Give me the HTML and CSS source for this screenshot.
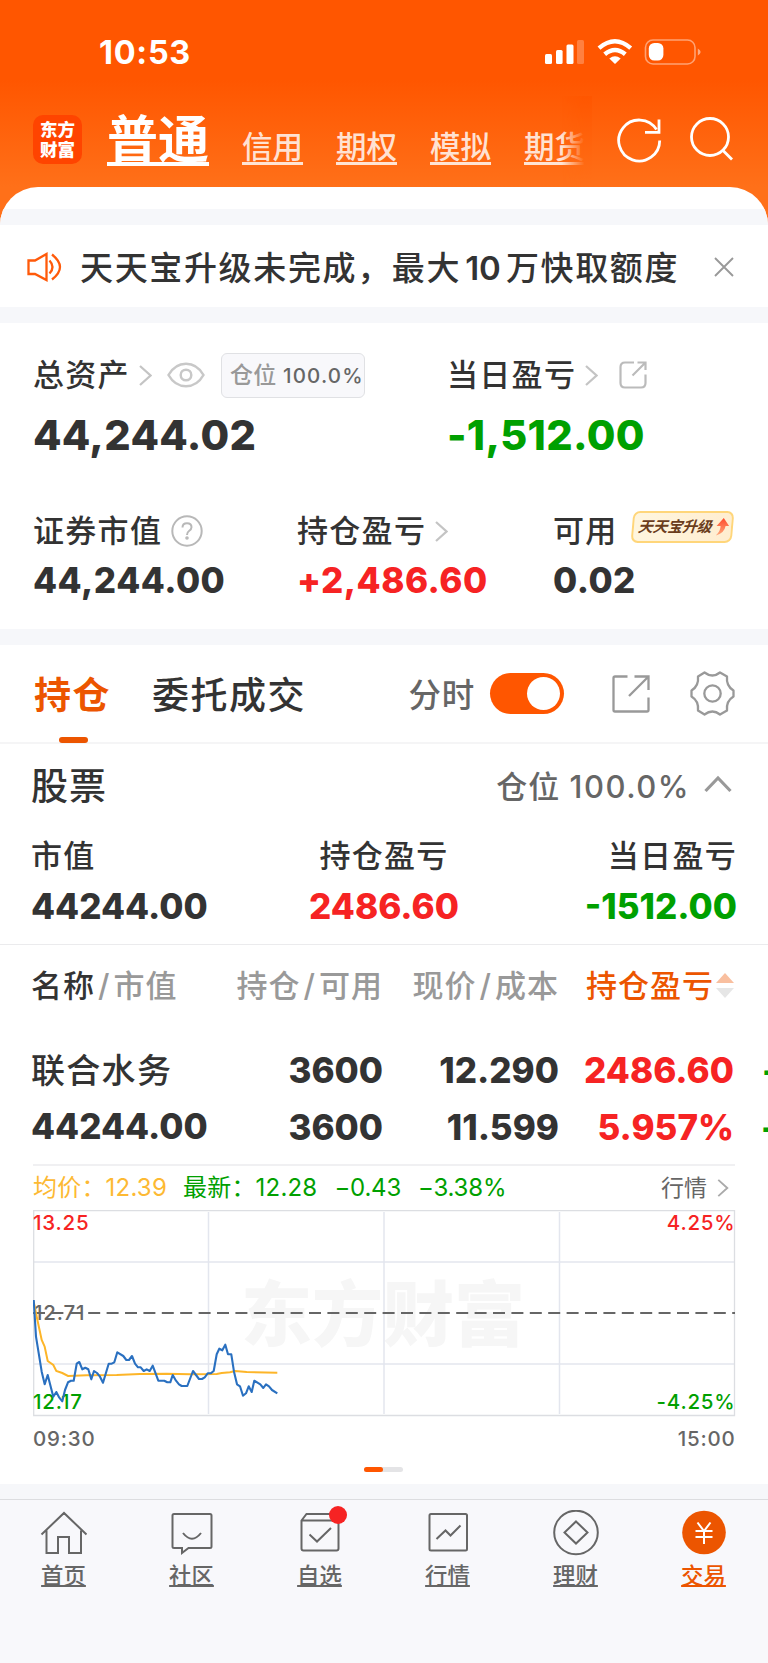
FILE: index.html
```html
<!DOCTYPE html>
<html lang="zh-CN">
<head>
    <meta charset="UTF-8">
    <meta name="viewport" content="width=device-width, initial-scale=1.0">
    <title>东方财富 - 交易</title>
    <link rel="stylesheet" href="styles.css">
</head>
<body>
<div class="phone">
    <div class="statusbar">
        <span class="time">10:53</span>
        <svg class="status-icons" width="158" height="28" viewBox="0 0 158 28">
            <g fill="#fff">
                <rect x="1" y="16" width="7" height="10" rx="1.5"/>
                <rect x="12" y="12" width="6.6" height="14" rx="1.5"/>
                <rect x="22.5" y="6.5" width="7" height="19.5" rx="1.5"/>
                <rect x="33" y="2" width="7" height="24" rx="1.5" opacity=".25"/>
            </g>
            <g fill="none" stroke="#fff" stroke-width="4.4">
                <path d="M55 10.2 Q71 -3.6 86.700 10.2"/>
                <path d="M60.700 16.3 Q71 7.6 81.300 16.3"/>
            </g>
            <path d="M65.3 20.6 Q71 15.8 76.700 20.6 L71 26 Z" fill="#fff"/>
            <rect x="101.500" y="2" width="49.5" height="24" rx="7.5" fill="none" stroke="#fff" stroke-opacity=".45" stroke-width="1.6"/>
            <rect x="104.800" y="5" width="14.6" height="17.6" rx="5.500" fill="#fff"/>
            <path d="M153.8 10.5 Q159.500 14 153.8 17.5 Z" fill="#fff" opacity=".5"/>
        </svg>
    </div>

    <div class="topnav">
        <div class="logo"><span>东方</span><span>财富</span></div>
        <div class="accounts">
            <a class="current">普通</a>
            <a>信用</a>
            <a>期权</a>
            <a>模拟</a>
            <a>期货</a>
        </div>
        <svg class="nav-icon refresh" width="46" height="46" viewBox="0 0 46 46" fill="none" stroke="#fff" stroke-width="2.800">
            <path d="M42.7 23.5 A20.5 20.5 0 1 1 39.5 12.5"/>
            <path d="M42 2.5 V15.3 H28"/>
        </svg>
        <svg class="nav-icon" width="46" height="46" viewBox="0 0 46 46" fill="none" stroke="#fff" stroke-width="2.800">
            <circle cx="21" cy="20" r="18.5"/>
            <path d="M33.5 33 L43 42.500"/>
        </svg>
    </div>

    <div class="sheet">
        <div class="sheet-top"></div>
        <div class="gap"></div>

        <div class="notice">
            <svg width="36" height="32" viewBox="0 0 36 32" fill="none" stroke="#ff5a0a" stroke-width="2.300">
                <path d="M2.500 9.500 H9 L20.500 3 V29 L9 23 H2.500 Z"/>
                <path d="M23.500 9.500 Q29.500 16 23.500 22.500"/>
                <path d="M26 3.500 Q42 16 26 28.500"/>
            </svg>
            <span class="notice-text">天天宝升级未完成，最大<b>10</b>万快取额度</span>
            <svg class="close" width="20" height="20" viewBox="0 0 20 20" stroke="#999" stroke-width="1.9">
                <path d="M1 1 L19 19 M19 1 L1 19"/>
            </svg>
        </div>
        <div class="gap"></div>

        <div class="assets">
            <div class="asset-total">
                <div class="label">总资产
                    <svg class="chev" width="13" height="21" viewBox="0 0 13 21"><path d="M1 1 L11.500 10.500 L1 20"/></svg>
                    <svg class="eye" width="38" height="26" viewBox="0 0 38 26" fill="none" stroke="#c8c8c8" stroke-width="2.500">
                        <path d="M1.500 13 C10 -2 28 -2 36.500 13 C28 28 10 28 1.500 13 Z"/>
                        <circle cx="19" cy="13" r="5.300"/>
                    </svg>
                    <span class="ratio">仓位 <b>100.0%</b></span>
                </div>
                <div class="big">44,244.02</div>
            </div>
            <div class="asset-today">
                <div class="label">当日盈亏
                    <svg class="chev" width="13" height="21" viewBox="0 0 13 21"><path d="M1 1 L11.500 10.500 L1 20"/></svg>
                    <svg class="share" width="28" height="28" viewBox="0 0 28 28" fill="none" stroke="#bbb" stroke-width="2.200">
                        <path d="M15 1.500 H6 Q1.500 1.500 1.500 6 V22 Q1.500 26.500 6 26.500 H22 Q26.500 26.500 26.500 22 V13.500"/>
                        <path d="M18.500 1.500 H26.500 V9 M26 2 L13.500 14.500"/>
                    </svg>
                </div>
                <div class="big green">-1,512.00</div>
            </div>
        </div>
        <div class="assets second">
            <div class="asset-stock">
                <div class="label">证券市值
                    <svg class="help" width="32" height="32" viewBox="0 0 32 32" fill="none" stroke="#b8b8b8" stroke-width="2">
                        <circle cx="16" cy="16" r="14.700"/>
                        <path d="M11.500 12.500 Q11.500 8.300 16 8.300 Q20.500 8.300 20.500 12.300 Q20.500 14.300 18 16 Q16 17.400 16 20"/>
                        <circle cx="16" cy="23" r=".8" fill="#b8b8b8"/>
                    </svg>
                </div>
                <div class="mid">44,244.00</div>
            </div>
            <div class="asset-hold">
                <div class="label">持仓盈亏
                    <svg class="chev" width="13" height="21" viewBox="0 0 13 21"><path d="M1 1 L11.500 10.500 L1 20"/></svg>
                </div>
                <div class="mid red">+2,486.60</div>
            </div>
            <div class="asset-cash">
                <div class="label">可用
                    <span class="upgrade"><i>天天宝升级</i>
                        <svg width="14" height="18" viewBox="0 0 14 18">
                            <defs><linearGradient id="up" x1="0" y1="0" x2="0" y2="1"><stop offset="0" stop-color="#ff4a2c"/><stop offset="1" stop-color="#ffa77a"/></linearGradient></defs>
                            <path d="M8 0 L14 8 H10.500 Q10 15 1.500 17.500 Q6 13 5.500 8 H1.500 Z" fill="url(#up)"/>
                        </svg>
                    </span>
                </div>
                <div class="mid">0.02</div>
            </div>
        </div>
        <div class="gap"></div>

        <div class="tabs">
            <span class="tab active">持仓</span>
            <span class="tab">委托成交</span>
            <span class="switch-label">分时</span>
            <span class="switch"></span>
            <svg class="export" width="38" height="38" viewBox="0 0 38 38" fill="none" stroke="#999" stroke-width="2.300">
                <path d="M15.500 1.500 H3 Q1.500 1.500 1.500 3 V35 Q1.500 36.500 3 36.500 H35 Q36.500 36.500 36.500 35 V22.500"/>
                <path d="M22.500 1.500 H36.500 V15 M36 2 L17 21"/>
            </svg>
            <svg class="gear" width="45" height="45" viewBox="0 0 45 45" fill="none" stroke="#999" stroke-width="2.300" stroke-linejoin="round">
                <path d="M14.500 1.500 Q22.500 7.500 30 1.500 L37 5.500 Q36 15 43.500 19.500 V25.500 Q36 30 37 39.500 L30 43.500 Q22.500 37.500 14.500 43.500 L8 39.500 Q9 30 1.500 25.500 V19.500 Q9 15 8 5.500 Z"/>
                <circle cx="22.500" cy="22.500" r="8.200"/>
            </svg>
        </div>

        <div class="group-head">
            <span class="group-name">股票</span>
            <span class="group-ratio">仓位 <b>100.0%</b></span>
            <svg width="28" height="18" viewBox="0 0 28 18" fill="none" stroke="#999" stroke-width="3.200"><path d="M1.500 16 L14 3 L26.500 16"/></svg>
        </div>
        <div class="summary">
            <div><p>市值</p><strong>44244.00</strong></div>
            <div class="center"><p>持仓盈亏</p><strong class="red">2486.60</strong></div>
            <div class="right"><p>当日盈亏</p><strong class="green">-1512.00</strong></div>
        </div>

        <div class="grid-row head">
            <span><em>名称</em><s>/</s>市值</span>
            <span>持仓<s>/</s>可用</span>
            <span>现价<s>/</s>成本</span>
            <span class="sorted">持仓盈亏<svg width="18" height="28" viewBox="0 0 18 28">
                <path d="M9 1 L18 11 H0 Z" fill="#f9bf9f"/>
                <path d="M9 26 L18 16 H0 Z" fill="#e6e6e6"/>
            </svg></span>
        </div>
        <div class="grid-row stock">
            <span class="name">联合水务</span>
            <span>3600</span>
            <span>12.290</span>
            <span class="red">2486.60</span>
            <span class="green next">-</span>
        </div>
        <div class="grid-row stock last">
            <span class="amount">44244.00</span>
            <span>3600</span>
            <span>11.599</span>
            <span class="red">5.957%</span>
            <span class="green next more">-</span>
        </div>

        <div class="quote">
            <span class="avg">均价：12.39</span>
            <span class="latest price">最新：12.28</span>
            <span class="latest">−0.43</span>
            <span class="latest">−3.38%</span>
            <span class="link">行情<svg class="chev" width="12" height="18" viewBox="0 0 13 21"><path d="M1 1 L11.500 10.500 L1 20"/></svg></span>
        </div>

        <svg class="chart" width="704" height="250" viewBox="0 0 704 250">
            <text class="watermark" x="208" y="130">东方财富</text>
            <g fill="none" stroke="#e3e6ee" stroke-width="1.500">
                <path d="M.5 52 H702 M.5 154 H702 M175.500 2 V204 M351 2 V204 M526.500 2 V204"/>
            </g>
            <path d="M.7 205.500 V.5 H701.500 V205.500 Z" fill="none" stroke="#dcdee2" stroke-width="1.300"/>
            <path d="M0 103 H702" stroke="#666" stroke-width="2" stroke-dasharray="12 6.400"/>
            <g class="axis">
                <text x="0" y="19.500" fill="#f62323">13.25</text>
                <text x="1" y="109.500">12.71</text>
                <text x="0" y="199" fill="#00a000">12.17</text>
                <text x="702.500" y="19.500" text-anchor="end" fill="#f62323">4.25%</text>
                <text x="702.500" y="199" text-anchor="end" fill="#00a000">-4.25%</text>
                <text x="0" y="236">09:30</text>
                <text x="702.500" y="236" text-anchor="end">15:00</text>
            </g>
            <polyline fill="none" stroke="#fdb528" stroke-width="2" points="0.700,91.700 3.700,106.700 8.700,130 11.700,136.700 14.700,151 20.300,155 23.300,161 29.300,163 35,166 53.700,165.300 83.700,165 107,164 133.700,163.700 157,164.300 183.700,164 188.700,163 197,162.300 202,161 213.700,162 244.300,162.700"/>
            <polyline fill="none" stroke="#2a70c0" stroke-width="2.100" stroke-linejoin="round" points="0.700,90 3,126.700 8.700,161.700 11.700,174.300 14.700,165 20.300,186.700 23.300,182 26.300,187.700 29.300,191.300 32,180 35,172.300 38,170.700 40.700,170.700 43.700,153.700 46.300,152 49.300,159.300 52.300,157.700 55.300,159.300 58.300,169.300 61,161 64,163 67,166.700 70,172.700 75.700,153.700 78.700,153.700 81.300,152.300 84.300,142.300 90.300,146 93.300,150 96,150 99,146 102,153.700 105,157.300 107.700,157.300 110.700,161 113.700,159.300 116.700,161 119.700,155.700 125.300,170.700 131.300,170.700 134.300,172.300 137.300,172.300 139.700,165 143,170.700 146,174.300 148.700,176 154.300,176 160,161 166,169 169,169 171.700,167.300 174.700,163.300 177.700,163.300 180.700,161 183.700,144.300 186.300,138.700 189.300,140.300 192.300,134.700 195,144.300 198.300,144.300 201,161.700 204,174.300 207,176.300 210,185.700 213,183.300 215.700,176.300 218.700,182 221.300,170.700 227.300,174.300 230.300,178 233,174.300 236,176.300 239,180 244.300,183.300"/>
        </svg>
        <div class="pager"><span></span></div>
    </div>

    <div class="tabbar">
        <a>
            <svg width="48" height="48" viewBox="0 0 48 48"><path d="M1.500 24.500 L24 3 L46.500 24.500 M6.500 20.500 V43 H18 V27 H29 V43 H41 V20.500"/></svg>
            <span>首页</span>
        </a>
        <a>
            <svg width="48" height="48" viewBox="0 0 48 48"><path d="M6 4 H42 Q43.500 4 43.500 5.500 V36.500 Q43.500 38 42 38 H20.500 L14 43 V38 H6 Q4.500 38 4.500 36.500 V5.500 Q4.500 4 6 4 Z M15 23 Q24 34.500 33 23"/></svg>
            <span>社区</span>
        </a>
        <a>
            <svg width="48" height="48" viewBox="0 0 48 48"><path d="M5.500 10.500 L10.500 4 H37.500 L42.500 10.500 V38.500 Q42.500 40.500 40.500 40.500 H7.500 Q5.500 40.500 5.500 38.500 Z M5.500 10.500 H42.500 M13.500 24.500 L21 31.500 L35 18"/></svg>
            <i class="dot"></i>
            <span>自选</span>
        </a>
        <a>
            <svg width="48" height="48" viewBox="0 0 48 48"><path d="M7 4 H41.500 Q43 4 43 5.500 V39 Q43 40.500 41.500 40.500 H7 Q5.500 40.500 5.500 39 V5.500 Q5.500 4 7 4 Z M12.500 29 L21.500 20.500 L26.500 25.500 L36.500 15.500"/></svg>
            <span>行情</span>
        </a>
        <a>
            <svg width="48" height="48" viewBox="0 0 48 48"><circle cx="24" cy="22.500" r="21.800"/><path d="M24 11.500 L35.500 22.500 L24 33.500 L12.500 22.500 Z"/></svg>
            <span>理财</span>
        </a>
        <a class="on">
            <svg width="48" height="48" viewBox="0 0 48 48"><circle cx="24" cy="22.500" r="21.800" fill="#ec5500" stroke="none"/><path d="M17.500 12.500 L24 21 L30.500 12.500 M15.500 21 H32.500 M15.500 27 H32.500 M24 21 V34" stroke="#fff"/></svg>
            <span>交易</span>
        </a>
    </div>
</div>
</body>
</html>
```

FILE: styles.css
```css
* {
    box-sizing: border-box;
}
body {
    margin: 0;
    font-family: Inter, "Noto Sans CJK SC", sans-serif;
    font-weight: 500;
    color: #333;
}
svg {
    display: block;
    flex: none;
}
.phone {
    width: 768px;
    height: 1663px;
    overflow: hidden;
    background: linear-gradient(#ff5600 80px, #ff7019 187px);
}
.red { color: #f62323; }
.green { color: #00a000; }

/* status bar */
.statusbar {
    display: flex;
    align-items: flex-start;
    justify-content: space-between;
    height: 96px;
    padding: 36px 66px 0 99px;
}
.time {
    margin-top: 1px;
    font-size: 32.500px;
    font-weight: 700;
    line-height: 32px;
    letter-spacing: .7px;
    color: #fff;
}
.status-icons {
    margin-top: 2px;
}

/* account tabs */
.topnav {
    display: flex;
    align-items: flex-start;
    height: 91px;
    padding-left: 33px;
}
.logo {
    width: 49px;
    height: 49px;
    margin-top: 19px;
    padding-top: 5px;
    border-radius: 10px;
    background: #ff4400;
    color: #fff;
    font-size: 17.5px;
    font-weight: 900;
    line-height: 20px;
    text-align: center;
}
.logo span {
    display: block;
}
.accounts {
    position: relative;
    display: flex;
    align-items: baseline;
    gap: 33px;
    width: 485px;
    height: 91px;
    margin-left: 25px;
    overflow: hidden;
    white-space: nowrap;
}
.accounts a {
    font-size: 30.5px;
    line-height: 88px;
    color: rgba(255, 255, 255, .82);
    text-decoration: underline;
    text-decoration-thickness: 2.500px;
    text-underline-offset: 3.500px;
    text-decoration-skip-ink: none;
}
.accounts .current {
    font-size: 51px;
    font-weight: 700;
    color: #fff;
    text-decoration-thickness: 4px;
}
.accounts::after {
    content: "";
    position: absolute;
    top: 0;
    right: 0;
    width: 30px;
    height: 91px;
    background: linear-gradient(#ff5600, #ff7019);
    -webkit-mask-image: linear-gradient(to right, transparent, #000 75%);
    mask-image: linear-gradient(to right, transparent, #000 75%);
}
.nav-icon {
    margin-top: 21px;
}
.refresh {
    margin: 21px 26px 0 25px;
}

/* white sheet */
.sheet {
    height: 1312px;
    overflow: hidden;
    border-radius: 38px 38px 0 0;
    background: #fff;
}
.sheet-top {
    height: 22px;
}
.gap {
    height: 16px;
    background: #f6f7fa;
}
.notice {
    display: flex;
    align-items: center;
    height: 82px;
    padding: 2px 34px 0 26px;
}
.notice-text {
    margin: 2px 0 0 18px;
    font-size: 33px;
    line-height: 40px;
    letter-spacing: 1.650px;
    white-space: nowrap;
}
.notice-text b {
    margin: 0 5px 0 4px;
    font-weight: 600;
    letter-spacing: 0;
}
.close {
    margin-left: auto;
}

/* assets */
.assets {
    display: flex;
    height: 153px;
    padding: 30px 33px 0;
}
.label {
    display: flex;
    align-items: center;
    height: 44px;
    font-size: 31px;
    line-height: 44px;
    letter-spacing: 1.300px;
    white-space: nowrap;
}
.chev {
    margin-left: 9px;
    fill: none;
    stroke: #c4c4c4;
    stroke-width: 2.200;
}
.asset-total { width: 414px; }
.eye { margin-left: 15px; }
.ratio {
    width: 144px;
    height: 45px;
    margin-left: 16px;
    padding-left: 8px;
    border: 1px solid #e0e1e4;
    border-radius: 6px;
    background: #f8f8fb;
    font-size: 23px;
    line-height: 43px;
    letter-spacing: .3px;
    color: #999;
}
.ratio b {
    font-size: 20.500px;
    font-weight: 500;
    letter-spacing: 1.200px;
    color: #666;
}
.share { margin-left: 21px; }
.big {
    margin-top: 15px;
    font-size: 41.500px;
    font-weight: 800;
    line-height: 46px;
    letter-spacing: .3px;
}
.second .label {
    height: 38px;
    line-height: 38px;
}
.assets.second {
    padding-top: 36px;
}
.asset-stock { width: 264px; }
.asset-hold { width: 256px; }
.help { margin-left: 9px; }
.mid {
    margin-top: 10px;
    font-size: 35px;
    font-weight: 800;
    line-height: 40px;
    letter-spacing: .5px;
}
.upgrade {
    display: flex;
    align-items: center;
    width: 101px;
    height: 32px;
    margin: -8px 0 0 14px;
    padding-left: 4px;
    border: 2px solid #ffd67a;
    border-radius: 7px;
    background: linear-gradient(100deg, #fff6df, #ffedd0);
    transform: skewX(-5deg);
}
.upgrade i {
    font-size: 15px;
    font-weight: 700;
    line-height: 28px;
    letter-spacing: -.3px;
    color: #6b3d1c;
}
.upgrade svg { margin-left: 3px; }

/* section tabs */
.tabs {
    display: flex;
    align-items: center;
    height: 99px;
    padding-left: 34px;
    border-bottom: 2px solid #f5f5f6;
}
.tab {
    position: relative;
    padding-top: 4px;
    font-size: 37px;
    line-height: 93px;
    letter-spacing: 1.500px;
}
.tab.active {
    margin-right: 41px;
    font-weight: 700;
    color: #ec5500;
}
.tab.active::after {
    content: "";
    position: absolute;
    left: 25px;
    bottom: -1px;
    width: 29px;
    height: 6px;
    border-radius: 3px;
    background: #ec5500;
}
.switch-label {
    margin-left: auto;
    padding-top: 4px;
    font-size: 32.500px;
    line-height: 93px;
    letter-spacing: .8px;
    color: #666;
}
.switch {
    width: 74px;
    height: 41px;
    margin-left: 15px;
    padding: 4px;
    border-radius: 21px;
    background: #ff5600;
}
.switch::after {
    content: "";
    display: block;
    width: 33px;
    height: 33px;
    margin-left: 33px;
    border-radius: 50%;
    background: #fff;
}
.export { margin-left: 48px; }
.gear { margin: 0 33px 0 40px; }

/* stock group */
.group-head {
    display: flex;
    align-items: center;
    height: 80px;
    padding: 0 36px 0 31px;
}
.group-name {
    font-size: 37px;
    letter-spacing: 1px;
}
.group-ratio {
    margin-left: auto;
    font-size: 31px;
    letter-spacing: 1px;
    color: #666;
}
.group-ratio b {
    font-weight: 500;
    letter-spacing: 1.500px;
}
.group-head svg { margin-left: 14px; }
.summary {
    display: flex;
    height: 121px;
    padding: 11px 31px 0;
    border-bottom: 1px solid #ebebed;
}
.summary div { flex: 1; }
.summary .center { text-align: center; }
.summary .right { text-align: right; }
.summary p {
    margin: 0;
    font-size: 31px;
    line-height: 42px;
    letter-spacing: 1.300px;
}
.summary strong {
    display: block;
    margin-top: 8px;
    font-size: 35px;
    font-weight: 800;
    line-height: 42px;
}

/* holdings */
.grid-row {
    display: grid;
    grid-template-columns: 200px 152px 176px 175px 34px;
    width: 768px;
    height: 57px;
    padding-left: 31px;
    font-size: 35px;
    font-weight: 800;
    line-height: 57px;
    text-align: right;
    white-space: nowrap;
}
.grid-row span:first-child {
    text-align: left;
}
.grid-row.head {
    height: 97px;
    font-size: 31px;
    font-weight: 500;
    line-height: 82px;
    letter-spacing: 1px;
    color: #999;
}
.head em {
    font-style: normal;
    color: #333;
}
.head s {
    margin: 0 3px;
    text-decoration: none;
}
.head .sorted {
    display: flex;
    justify-content: flex-end;
    color: #ec5500;
}
.sorted svg { margin: 27px 0 0 2px; }
.stock .name {
    font-size: 34px;
    font-weight: 500;
    letter-spacing: 1.300px;
}
.stock .amount {
    line-height: 55px;
}
.stock .next {
    padding-left: 28px;
    text-align: left;
}
.stock .more {
    padding-left: 27px;
}
.stock.last {
    height: 65px;
}

/* mini chart */
.quote {
    display: flex;
    align-items: center;
    height: 46px;
    margin: 0 33px;
    border-top: 2px solid #f0f0f2;
    font-size: 24px;
    font-weight: 400;
    line-height: 44px;
    white-space: nowrap;
}
.quote .avg {
    margin-right: 16px;
    letter-spacing: .2px;
    color: #fdb933;
}
.quote .latest {
    margin-right: 17px;
    letter-spacing: -.2px;
    color: #00a000;
}
.quote .price {
    letter-spacing: .2px;
}
.quote .link {
    display: flex;
    align-items: center;
    margin-left: auto;
    padding-right: 6px;
    font-size: 23px;
    color: #666;
}
.link .chev {
    margin-left: 10px;
    stroke: #aaa;
}
.chart {
    margin-left: 33px;
}
.axis {
    font-size: 20.500px;
    font-weight: 500;
    letter-spacing: .8px;
    fill: #666;
}
.watermark {
    font-size: 71px;
    font-weight: 900;
    fill: #f6f6f6;
}
.pager {
    width: 39px;
    height: 5px;
    margin: 7px 0 0 364px;
    border-radius: 3px;
    background: #e4e4e6;
}
.pager span {
    display: block;
    width: 19px;
    height: 5px;
    border-radius: 3px;
    background: #ff5600;
}
.sheet::after {
    content: "";
    display: block;
    height: 30px;
    margin-top: 12px;
    background: #f6f7fa;
}

/* bottom bar */
.tabbar {
    display: flex;
    height: 164px;
    padding-top: 10px;
    border-top: 1px solid #dcdde0;
    background: #f8f8fb;
}
.tabbar a {
    position: relative;
    display: flex;
    flex-direction: column;
    align-items: center;
    left: -.5px;
    width: 128px;
    font-size: 22.400px;
    line-height: 30px;
    color: #666;
}
.tabbar svg {
    fill: none;
    stroke: #666;
    stroke-width: 2;
}
.tabbar span {
    margin-top: 3px;
    text-decoration: underline;
    text-decoration-thickness: 2px;
    text-underline-offset: 1px;
    text-decoration-skip-ink: none;
}
.tabbar .on {
    color: #ec5500;
}
.dot {
    position: absolute;
    top: -4px;
    left: 73px;
    width: 18px;
    height: 18px;
    border-radius: 50%;
    background: #f62323;
}
```
